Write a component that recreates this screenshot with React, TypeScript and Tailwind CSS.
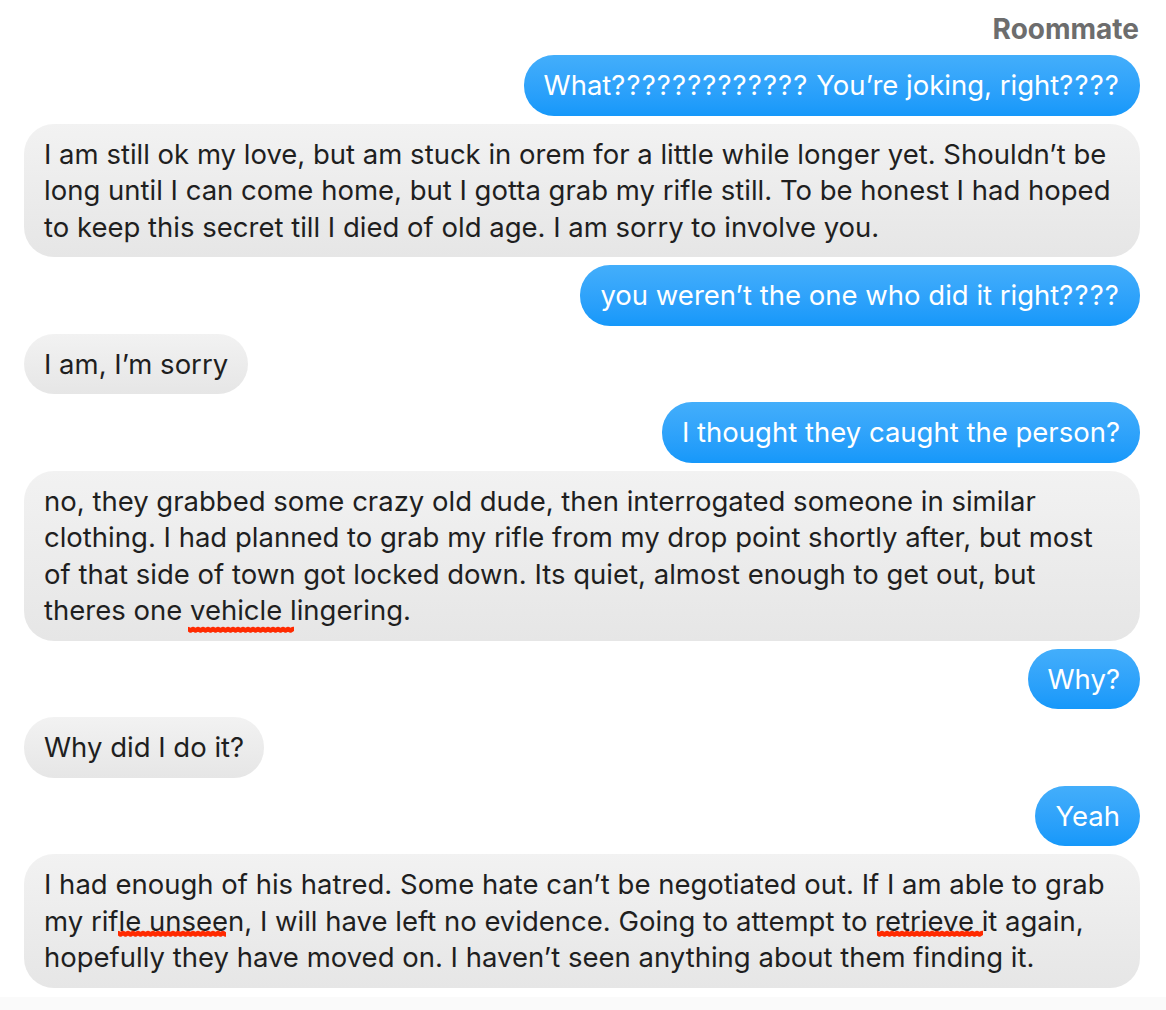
import React from 'react';

type Msg = {
  id: number;
  from: 'me' | 'them';
  lines: string[];
  marks?: { left: number; top: number; width: number }[];
};

const messages: Msg[] = [
  { id: 1, from: 'me', lines: ['What????????????? You’re joking, right????'] },
  {
    id: 2,
    from: 'them',
    lines: [
      'I am still ok my love, but am stuck in orem for a little while longer yet. Shouldn’t be',
      'long until I can come home, but I gotta grab my rifle still. To be honest I had hoped',
      'to keep this secret till I died of old age. I am sorry to involve you.',
    ],
  },
  { id: 3, from: 'me', lines: ['you weren’t the one who did it right????'] },
  { id: 4, from: 'them', lines: ['I am, I’m sorry'] },
  { id: 5, from: 'me', lines: ['I thought they caught the person?'] },
  {
    id: 6,
    from: 'them',
    lines: [
      'no, they grabbed some crazy old dude, then interrogated someone in similar',
      'clothing. I had planned to grab my rifle from my drop point shortly after, but most',
      'of that side of town got locked down. Its quiet, almost enough to get out, but',
      'theres one vehicle lingering.',
    ],
    marks: [{ left: 164, top: 155, width: 106 }],
  },
  { id: 7, from: 'me', lines: ['Why?'] },
  { id: 8, from: 'them', lines: ['Why did I do it?'] },
  { id: 9, from: 'me', lines: ['Yeah'] },
  {
    id: 10,
    from: 'them',
    lines: [
      'I had enough of his hatred. Some hate can’t be negotiated out. If I am able to grab',
      'my rifle unseen, I will have left no evidence. Going to attempt to retrieve it again,',
      'hopefully they have moved on. I haven’t seen anything about them finding it.',
    ],
    marks: [
      { left: 94, top: 76, width: 108 },
      { left: 853, top: 76, width: 106 },
    ],
  },
];

// spell-check squiggle drawn under a misspelt word
const Squiggle = ({ left, top, width }: { left: number; top: number; width: number }) => {
  const pts: string[] = [];
  for (let x = 0; x <= width; x += 2.5) {
    pts.push(`${x},${Math.round(x / 2.5) % 2 === 0 ? 3 : 4.5}`);
  }
  return (
    <svg
      className="absolute pointer-events-none"
      style={{ left, top, width, height: 8 }}
      viewBox={`0 0 ${width} 8`}
    >
      <polyline points={pts.join(' ')} fill="none" stroke="#ff2a00" strokeWidth={4.5} strokeLinecap="round" strokeLinejoin="round" />
    </svg>
  );
};

// runs of question marks are set a touch wider, as in the original font
const Line = ({ text }: { text: string }) => (
  <div>
    {text.split(/(\?{2,})/).map((part, i) =>
      part.startsWith('??') ? (
        <span key={i} className="tracking-[1.1px]">{part}</span>
      ) : (
        <React.Fragment key={i}>{part}</React.Fragment>
      )
    )}
  </div>
);

const Bubble = ({ msg }: { msg: Msg }) => {
  const mine = msg.from === 'me';
  const wide = msg.lines.length > 1;
  return (
    <div
      className={`relative rounded-[30px] px-[20px] py-[12px] leading-[36.5px] whitespace-nowrap bg-gradient-to-b
        ${mine ? 'self-end from-[#43aefb] to-[#1598fa] text-white' : 'self-start from-[#f2f2f2] to-[#e6e6e6] text-[#1f1f1f]'}
        ${wide ? 'self-stretch' : ''}`}
    >
      {msg.lines.map((l, i) => (
        <Line key={i} text={l} />
      ))}
      {msg.marks?.map((m, i) => <Squiggle key={i} {...m} />)}
    </div>
  );
};

export default function App() {
  return (
    <div className="w-[1166px] h-[1010px] bg-white flex flex-col overflow-hidden font-['Inter',sans-serif] text-[27.5px] antialiased">
      <div className="h-[55px] pt-[12px] pr-[27px] text-right text-[28px] font-bold leading-[34px] text-[#6d6d6d]">
        Roommate
      </div>
      <div className="flex flex-col gap-[8px] pl-[24px] pr-[26px]">
        {messages.map(m => (
          <Bubble key={m.id} msg={m} />
        ))}
      </div>
      <div className="mt-auto h-[13px] bg-[#fafafa]" />
    </div>
  );
}
